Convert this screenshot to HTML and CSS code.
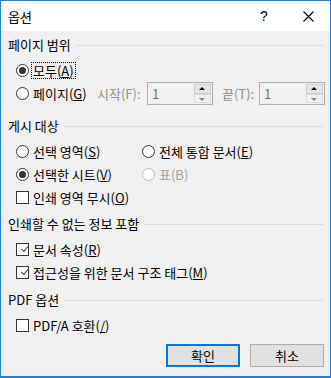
FILE: index.html
```html
<!DOCTYPE html>
<html>
<head>
<meta charset="utf-8">
<link rel="stylesheet" href="styles.css">
</head>
<body>
	<div class="window">
		<div class="titlebar">
			<span class="title">옵션</span>
			<span class="help">?</span>
			<span class="close">
				<svg width="11" height="11" viewBox="0 0 11 11"><path d="M0.5 0.5L10.5 10.5M10.5 0.5L0.5 10.5" stroke="#000" stroke-width="1.1" fill="none"/></svg>
			</span>
		</div>
		<div class="content">
			<div class="sec first">
				<div class="legend"><span>페이지 범위</span><i></i></div>
				<div class="opts">
					<div class="row">
						<span class="radio on"></span><span class="lbl focus">모두(<u>A</u>)</span>
					</div>
					<div class="row">
						<span class="radio"></span><span class="lbl page">페이지(<u>G</u>)</span>
						<span class="dim from">시작(F):</span>
						<span class="spin"><span class="val">1</span><span class="btns"><b class="up"></b><b class="down"></b></span></span>
						<span class="dim to">끝(T):</span>
						<span class="spin"><span class="val">1</span><span class="btns"><b class="up"></b><b class="down"></b></span></span>
					</div>
				</div>
			</div>
			<div class="sec wide">
				<div class="legend"><span>게시 대상</span><i></i></div>
				<div class="opts grid">
					<div class="row"><span class="radio"></span><span class="lbl">선택 영역(<u>S</u>)</span></div>
					<div class="row"><span class="radio"></span><span class="lbl">전체 통합 문서(<u>E</u>)</span></div>
					<div class="row"><span class="radio on"></span><span class="lbl">선택한 시트(<u>V</u>)</span></div>
					<div class="row off"><span class="radio"></span><span class="lbl">표(B)</span></div>
					<div class="row"><span class="check"></span><span class="lbl">인쇄 영역 무시(<u>O</u>)</span></div>
				</div>
			</div>
			<div class="sec tight">
				<div class="legend"><span>인쇄할 수 없는 정보 포함</span><i></i></div>
				<div class="opts">
					<div class="row"><span class="check on"></span><span class="lbl">문서 속성(<u>R</u>)</span></div>
					<div class="row"><span class="check on"></span><span class="lbl">접근성을 위한 문서 구조 태그(<u>M</u>)</span></div>
				</div>
			</div>
			<div class="sec">
				<div class="legend"><span>PDF 옵션</span><i></i></div>
				<div class="opts">
					<div class="row"><span class="check"></span><span class="lbl">PDF/A 호환(<u>/</u>)</span></div>
				</div>
			</div>
			<div class="buttons">
				<button class="btn default">확인</button>
				<button class="btn">취소</button>
			</div>
		</div>
	</div>
</body>
</html>
```

FILE: styles.css
```css
body{
	margin: 0;
	font-family: "Noto Sans CJK KR", "Noto Sans", sans-serif;
	font-size: 13px;
	color: #000;
}
.window{
	width: 331px;
	height: 378px;
	box-sizing: border-box;
	border: 1px solid #1c7fd6;
	border-bottom-width: 2px;
	background: #f0f0f0;
}
.titlebar{
	height: 30px;
	background: #fff;
	display: flex;
	align-items: center;
	padding-left: 7px;
}
.title{
	flex: 1;
}
.help{
	width: 43px;
	font-family: "Liberation Sans", sans-serif;
	font-size: 14px;
}
.close{
	width: 27px;
	display: flex;
	padding-top: 1px;
}
.content{
	padding: 0 5px 0 7px;
	white-space: nowrap;
}
.sec{
	margin-top: 5px;
}
.sec.first{
	margin-top: 3px;
}
.sec.wide{
	margin-top: 10px;
}
.sec.tight{
	margin-top: 4px;
}
.legend{
	height: 20px;
	display: flex;
	align-items: center;
}
.legend i{
	flex: 1;
	height: 0;
	border-top: 1px solid #dcdcdc;
	margin: 2px 1px 0 5px;
}
.opts{
	padding-top: 5px;
	padding-left: 8px;
}
.grid{
	display: grid;
	grid-template-columns: 126px 1fr;
}
.grid .row:last-child{
	grid-column: 1 / 3;
}
.row{
	height: 23px;
	display: flex;
	align-items: center;
}
.row > span{
	flex-shrink: 0;
}
.row u{
	text-decoration: underline;
	text-underline-offset: 1px;
}
.lbl{
	margin-left: 2px;
	padding: 0 1px;
	line-height: 15px;
	border: 1px dotted transparent;
}
.lbl.focus{
	border-color: #000;
}
.lbl.page{
	width: 56px;
}
.radio{
	width: 13px;
	height: 13px;
	box-sizing: border-box;
	border: 1px solid #333;
	border-radius: 50%;
	background: #fff;
	display: flex;
	align-items: center;
	justify-content: center;
}
.radio.on::after{
	content: "";
	width: 7px;
	height: 7px;
	border-radius: 50%;
	background: #333;
}
.off .radio{
	border-color: #bcbcbc;
}
.off .lbl{
	color: #a0a0a0;
}
.check{
	width: 13px;
	height: 13px;
	box-sizing: border-box;
	border: 1px solid #333;
	background: #fff;
	position: relative;
}
.check.on::after{
	content: "";
	position: absolute;
	left: 3px;
	top: 0px;
	width: 3px;
	height: 7px;
	border: solid #444;
	border-width: 0 1px 1px 0;
	transform: rotate(40deg);
	transform-origin: 100% 100%;
}
.dim{
	color: #8d8d8d;
}
.from{
	margin-left: 6px;
	width: 50px;
}
.to{
	margin-left: 9px;
	width: 37px;
}
.spin{
	width: 66px;
	height: 23px;
	box-sizing: border-box;
	border: 1px solid #acacac;
	background: #f0f0f0;
	display: flex;
	padding: 1px;
}
.val{
	flex: 1;
	color: #6d6d6d;
	padding-left: 3px;
	line-height: 19px;
}
.btns{
	width: 17px;
	display: flex;
	flex-direction: column;
}
.btns b{
	flex: 1;
	box-sizing: border-box;
	border: 1px solid #cccccc;
	background: #e6e6e6;
	position: relative;
}
.btns b.down{
	background: #f0f0f0;
	border-color: #dadada;
}
.btns b::after{
	content: "";
	position: absolute;
	left: 4px;
	top: 2px;
	border: 3.5px solid transparent;
	border-bottom: 3px solid #000;
	border-top-width: 0;
}
.btns b.down::after{
	border-bottom-width: 0;
	border-top: 3px solid #8a8a8a;
	top: 3px;
}
.buttons{
	display: flex;
	justify-content: flex-end;
	gap: 10px;
	margin-top: 7px;
	padding-right: 1px;
}
.btn{
	width: 74px;
	height: 23px;
	box-sizing: border-box;
	border: 1px solid #adadad;
	background: #e1e1e1;
	font-family: "Noto Sans CJK KR", sans-serif;
	font-size: 13px;
	color: #000;
	padding: 0;
}
.btn.default{
	border: 2px solid #0078d7;
}
```
